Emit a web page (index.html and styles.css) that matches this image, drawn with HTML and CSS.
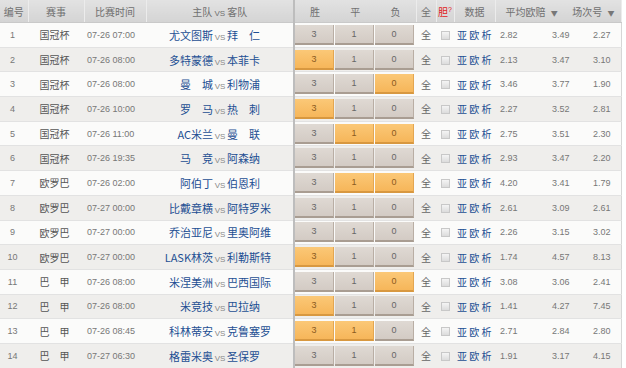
FILE: index.html
```html
<!DOCTYPE html>
<html>
<head>
<meta charset="utf-8">
<link rel="stylesheet" href="styles.css">
</head>
<body>
<table class="grid">
<colgroup>
<col class="c-no"><col class="c-lg"><col class="c-tm"><col class="c-team"><col class="c-btn"><col class="c-all"><col class="c-dan"><col class="c-data"><col class="c-o1"><col class="c-o2"><col class="c-o3">
</colgroup>
<thead>
<tr>
<th>编号</th><th>赛事</th><th>比赛时间</th><th class="th-team">主队 <span class="vs">VS</span> 客队</th>
<th class="th-btn"><div class="hbtns"><span>胜</span><span>平</span><span>负</span></div></th>
<th>全</th><th class="th-dan">胆<sup>?</sup></th><th>数据</th>
<th colspan="3" class="th-odds"><div class="hodds"><span class="h-avg">平均欧赔 <span class="arr">▼</span></span><span class="h-num">场次号 <span class="arr">▼</span></span></div></th>
</tr>
</thead>
<tbody>
<tr><td class="no">1</td><td class="lg">国冠杯</td><td class="tm">07-26 07:00</td><td class="team"><span class="home">尤文图斯</span><span class="vs">VS</span><span class="away">拜　仁</span></td><td class="btns"><div class="brow"><span class="b">3</span><span class="b">1</span><span class="b">0</span></div></td><td class="all">全</td><td class="dan"><i class="cb"></i></td><td class="data">亚 欧 析</td><td class="odd o1">2.82</td><td class="odd o2">3.49</td><td class="odd o3">2.27</td></tr>
<tr><td class="no">2</td><td class="lg">国冠杯</td><td class="tm">07-26 08:00</td><td class="team"><span class="home">多特蒙德</span><span class="vs">VS</span><span class="away">本菲卡</span></td><td class="btns"><div class="brow"><span class="b on">3</span><span class="b">1</span><span class="b">0</span></div></td><td class="all">全</td><td class="dan"><i class="cb"></i></td><td class="data">亚 欧 析</td><td class="odd o1">2.13</td><td class="odd o2">3.47</td><td class="odd o3">3.10</td></tr>
<tr><td class="no">3</td><td class="lg">国冠杯</td><td class="tm">07-26 08:00</td><td class="team"><span class="home">曼　城</span><span class="vs">VS</span><span class="away">利物浦</span></td><td class="btns"><div class="brow"><span class="b">3</span><span class="b">1</span><span class="b on">0</span></div></td><td class="all">全</td><td class="dan"><i class="cb"></i></td><td class="data">亚 欧 析</td><td class="odd o1">3.46</td><td class="odd o2">3.77</td><td class="odd o3">1.90</td></tr>
<tr><td class="no">4</td><td class="lg">国冠杯</td><td class="tm">07-26 10:00</td><td class="team"><span class="home">罗　马</span><span class="vs">VS</span><span class="away">热　刺</span></td><td class="btns"><div class="brow"><span class="b on">3</span><span class="b">1</span><span class="b">0</span></div></td><td class="all">全</td><td class="dan"><i class="cb"></i></td><td class="data">亚 欧 析</td><td class="odd o1">2.27</td><td class="odd o2">3.52</td><td class="odd o3">2.81</td></tr>
<tr><td class="no">5</td><td class="lg">国冠杯</td><td class="tm">07-26 11:00</td><td class="team"><span class="home">AC米兰</span><span class="vs">VS</span><span class="away">曼　联</span></td><td class="btns"><div class="brow"><span class="b">3</span><span class="b on">1</span><span class="b on">0</span></div></td><td class="all">全</td><td class="dan"><i class="cb"></i></td><td class="data">亚 欧 析</td><td class="odd o1">2.75</td><td class="odd o2">3.51</td><td class="odd o3">2.30</td></tr>
<tr><td class="no">6</td><td class="lg">国冠杯</td><td class="tm">07-26 19:35</td><td class="team"><span class="home">马　竞</span><span class="vs">VS</span><span class="away">阿森纳</span></td><td class="btns"><div class="brow"><span class="b">3</span><span class="b">1</span><span class="b">0</span></div></td><td class="all">全</td><td class="dan"><i class="cb"></i></td><td class="data">亚 欧 析</td><td class="odd o1">2.93</td><td class="odd o2">3.47</td><td class="odd o3">2.20</td></tr>
<tr><td class="no">7</td><td class="lg">欧罗巴</td><td class="tm">07-26 02:00</td><td class="team"><span class="home">阿伯丁</span><span class="vs">VS</span><span class="away">伯恩利</span></td><td class="btns"><div class="brow"><span class="b">3</span><span class="b on">1</span><span class="b on">0</span></div></td><td class="all">全</td><td class="dan"><i class="cb"></i></td><td class="data">亚 欧 析</td><td class="odd o1">4.20</td><td class="odd o2">3.41</td><td class="odd o3">1.79</td></tr>
<tr><td class="no">8</td><td class="lg">欧罗巴</td><td class="tm">07-27 00:00</td><td class="team"><span class="home">比戴章横</span><span class="vs">VS</span><span class="away">阿特罗米</span></td><td class="btns"><div class="brow"><span class="b">3</span><span class="b">1</span><span class="b">0</span></div></td><td class="all">全</td><td class="dan"><i class="cb"></i></td><td class="data">亚 欧 析</td><td class="odd o1">2.61</td><td class="odd o2">3.09</td><td class="odd o3">2.61</td></tr>
<tr><td class="no">9</td><td class="lg">欧罗巴</td><td class="tm">07-27 00:00</td><td class="team"><span class="home">乔治亚尼</span><span class="vs">VS</span><span class="away">里奥阿维</span></td><td class="btns"><div class="brow"><span class="b">3</span><span class="b">1</span><span class="b">0</span></div></td><td class="all">全</td><td class="dan"><i class="cb"></i></td><td class="data">亚 欧 析</td><td class="odd o1">2.26</td><td class="odd o2">3.15</td><td class="odd o3">3.02</td></tr>
<tr><td class="no">10</td><td class="lg">欧罗巴</td><td class="tm">07-27 00:00</td><td class="team"><span class="home">LASK林茨</span><span class="vs">VS</span><span class="away">利勒斯特</span></td><td class="btns"><div class="brow"><span class="b on">3</span><span class="b">1</span><span class="b">0</span></div></td><td class="all">全</td><td class="dan"><i class="cb"></i></td><td class="data">亚 欧 析</td><td class="odd o1">1.74</td><td class="odd o2">4.57</td><td class="odd o3">8.13</td></tr>
<tr><td class="no">11</td><td class="lg">巴　甲</td><td class="tm">07-26 08:00</td><td class="team"><span class="home">米涅美洲</span><span class="vs">VS</span><span class="away">巴西国际</span></td><td class="btns"><div class="brow"><span class="b">3</span><span class="b">1</span><span class="b on">0</span></div></td><td class="all">全</td><td class="dan"><i class="cb"></i></td><td class="data">亚 欧 析</td><td class="odd o1">3.08</td><td class="odd o2">3.06</td><td class="odd o3">2.41</td></tr>
<tr><td class="no">12</td><td class="lg">巴　甲</td><td class="tm">07-26 08:00</td><td class="team"><span class="home">米竞技</span><span class="vs">VS</span><span class="away">巴拉纳</span></td><td class="btns"><div class="brow"><span class="b on">3</span><span class="b">1</span><span class="b">0</span></div></td><td class="all">全</td><td class="dan"><i class="cb"></i></td><td class="data">亚 欧 析</td><td class="odd o1">1.41</td><td class="odd o2">4.27</td><td class="odd o3">7.45</td></tr>
<tr><td class="no">13</td><td class="lg">巴　甲</td><td class="tm">07-26 08:45</td><td class="team"><span class="home">科林蒂安</span><span class="vs">VS</span><span class="away">克鲁塞罗</span></td><td class="btns"><div class="brow"><span class="b on">3</span><span class="b on">1</span><span class="b">0</span></div></td><td class="all">全</td><td class="dan"><i class="cb"></i></td><td class="data">亚 欧 析</td><td class="odd o1">2.71</td><td class="odd o2">2.84</td><td class="odd o3">2.80</td></tr>
<tr><td class="no">14</td><td class="lg">巴　甲</td><td class="tm">07-27 06:30</td><td class="team"><span class="home">格雷米奥</span><span class="vs">VS</span><span class="away">圣保罗</span></td><td class="btns"><div class="brow"><span class="b">3</span><span class="b">1</span><span class="b">0</span></div></td><td class="all">全</td><td class="dan"><i class="cb"></i></td><td class="data">亚 欧 析</td><td class="odd o1">1.91</td><td class="odd o2">3.17</td><td class="odd o3">4.15</td></tr>
</tbody>
</table>
</body>
</html>
```

FILE: styles.css
```css
html, body { margin: 0; padding: 0; background: #ffffff; }
body { font-family: "Liberation Sans", "Noto Sans CJK SC", sans-serif; color: #666; }

.grid {
  table-layout: fixed;
  border-collapse: collapse;
  width: 621px;
  border-right: 1px solid #d6d6d6;
}
.c-no { width: 28px; }
.c-lg { width: 56px; }
.c-tm { width: 62px; }
.c-team { width: 148px; }
.c-btn { width: 122px; }
.c-all { width: 20px; }
.c-dan { width: 18px; }
.c-data { width: 41px; }
.c-o1 { width: 50px; }
.c-o2 { width: 45px; }
.c-o3 { width: 31px; }

thead th {
  height: 22px;
  padding: 0;
  font-weight: normal;
  font-family: "Noto Sans CJK SC", sans-serif;
  font-size: 10px;
  color: #707070;
  background: linear-gradient(#e2e2e2, #d4d4d4);
  border-right: 1px solid #ececec;
  border-bottom: 1px solid #c9c9c9;
  text-align: center;
  white-space: nowrap;
}
thead th.th-team { border-right: 2px solid #bdbdbd; }
thead th .vs { font-family: "Liberation Sans", sans-serif; font-size: 8px; }
.hbtns { display: flex; }
.hbtns span { flex: 1; text-align: center; }
thead th.th-dan { color: #e02020; }
.th-dan sup { font-size: 7px; font-family: "Liberation Sans", sans-serif; }
.arr { font-size: 7px; color: #777; margin-left: 3px; }
.hodds { display: flex; justify-content: space-between; padding: 0 6px 0 10px; }

tbody td {
  height: 23.7px;
  padding: 0;
  border-bottom: 1px solid #e2e2e2;
  text-align: center;
  white-space: nowrap;
  font-size: 9px;
}
tbody tr:nth-child(odd) td { background: #fbfbfa; }
tbody tr:nth-child(even) td { background: #efeeec; }

td.no { color: #777; padding-right: 3px; }
td.lg { font-family: "Noto Sans CJK SC", sans-serif; font-size: 10px; color: #555; padding-right: 3px; }
td.tm { color: #777; text-align: left; padding-left: 3px; }
td.team {
  border-right: 2px solid #bdbdbd;
  font-family: "Noto Sans CJK SC", sans-serif;
  font-size: 11px;
  color: #1d4f93;
  text-align: left;
}
td.team .home { display: inline-block; width: 67px; text-align: right; }
td.team .vs { display: inline-block; width: 14px; text-align: center; font-family: "Liberation Sans", sans-serif; font-size: 8px; color: #888; }
td.team .away { display: inline-block; }

td.btns { padding-left: 0; }
.brow { display: flex; gap: 1px; }
.brow .b {
  box-sizing: border-box;
  width: 39px;
  height: 20px;
  line-height: 19px;
  text-align: center;
  font-size: 9px;
  color: #666;
  background: linear-gradient(#dfd9d3, #d3cbc4);
  border-bottom: 2px solid #a99d92;
  border-right: 1px solid #b9aea4;
}
.brow .b.on {
  background: linear-gradient(#fbc877, #f6b65a);
  border-bottom-color: #d89840;
  border-right-color: #e3a651;
  color: #8a5a20;
}
td.all { font-family: "Noto Sans CJK SC", sans-serif; font-size: 10px; color: #666; }
.cb {
  display: inline-block;
  width: 7px; height: 7px;
  border: 1px solid #c8c8c8;
  background: linear-gradient(#f4f4f4, #dcdcdc);
  vertical-align: middle;
}
td.data { font-family: "Noto Sans CJK SC", sans-serif; font-size: 10px; color: #1d4f93; text-align: left; padding-left: 3px; }
td.odd { color: #777; text-align: left; }
td.o1 { padding-left: 5px; }
td.o2 { padding-left: 7px; }
td.o3 { padding-left: 3px; }
```
